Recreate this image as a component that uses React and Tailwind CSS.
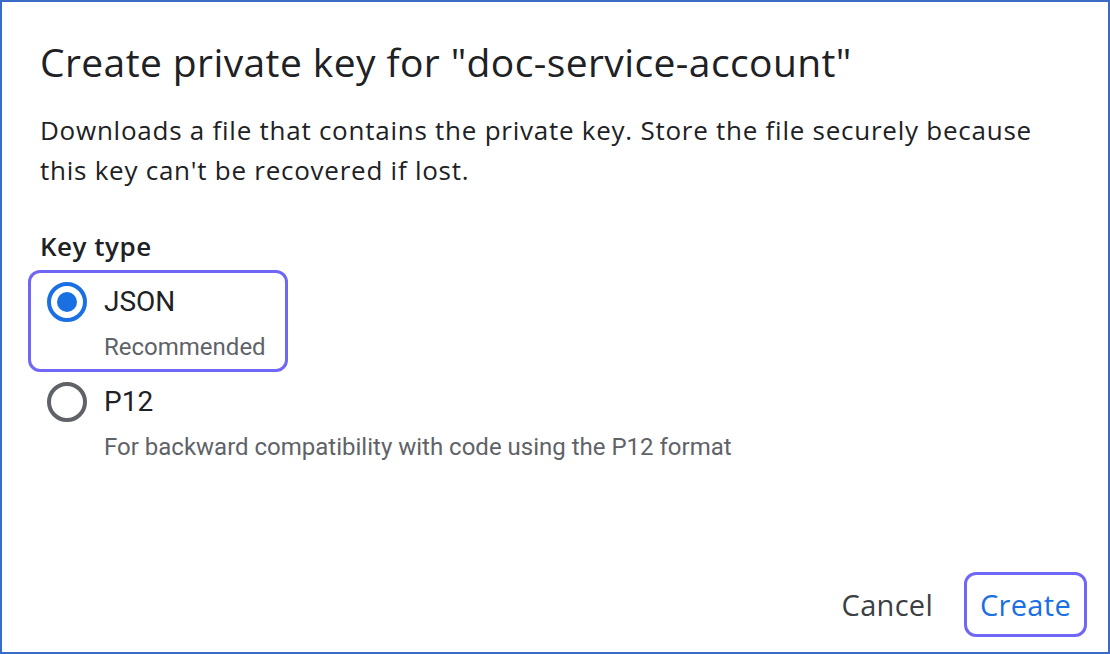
import React from "react";

const Radio = ({ checked }) => (
    <span
        className={`flex-shrink-0 w-[40px] h-[40px] rounded-full border-[4px] flex items-center justify-center ${
            checked ? "border-[#1a6fe3]" : "border-[#5f6368]"
        }`}
    >
        {checked && <span className="w-[20px] h-[20px] rounded-full bg-[#1a6fe3]" />}
    </span>
);

const KeyOption = ({ label, hint, checked, focused, className = "" }) => (
    <div
        className={`-ml-[12px] border-[3px] rounded-[12px] pl-[16px] pr-[18px] pt-[9px] pb-[7px] ${
            focused ? "border-[#7067f6] w-[260px]" : "border-transparent"
        } ${className}`}
    >
        <div className="flex items-center gap-[17px]">
            <Radio checked={checked} />
            <span className="text-[28px] leading-[40px] text-[#202124]">{label}</span>
        </div>
        <div className="ml-[57px] mt-[10px] text-[24px] leading-[30px] text-[#5f6368] whitespace-nowrap">{hint}</div>
    </div>
);

export default function App() {
    return (
        <div
            className="w-[1110px] h-[654px] bg-white border-2 border-[#3b6bc6] flex flex-col pl-[38px] pr-[21px] pt-[36px] pb-[15px]"
            style={{ fontFamily: "Roboto, 'Liberation Sans', sans-serif" }}
        >
            <h2 className="text-[39px] leading-[48px] tracking-[0.4px] text-[#202124] font-['Open_Sans',sans-serif] whitespace-nowrap">
                Create private key for "doc-service-account"
            </h2>
            <p className="mt-[24px] text-[26px] leading-[40px] tracking-[0.75px] text-[#202124] max-w-[1000px] font-['Open_Sans',sans-serif]">
                Downloads a file that contains the private key. Store the file securely because this key can't be
                recovered if lost.
            </p>
            <div className="mt-[36px] text-[26px] leading-[40px] tracking-[0.5px] font-semibold text-[#202124] font-['Open_Sans',sans-serif]">
                Key type
            </div>
            <div className="mt-[4px] flex flex-col">
                <KeyOption label="JSON" hint="Recommended" checked focused />
                <KeyOption
                    label="P12"
                    hint="For backward compatibility with code using the P12 format"
                    className="-mt-[2px]"
                />
            </div>
            <div className="mt-auto flex justify-end items-center gap-[15px] font-['Open_Sans',sans-serif]">
                <button className="px-[13px] h-[65px] border-[3px] border-transparent rounded-[12px] text-[29px] tracking-[0.3px] text-[#3c4043]">
                    Cancel
                </button>
                <button className="px-[13px] h-[65px] border-[3px] border-[#7067f6] rounded-[12px] text-[29px] tracking-[0.3px] text-[#1a6fe3]">
                    Create
                </button>
            </div>
        </div>
    );
}
